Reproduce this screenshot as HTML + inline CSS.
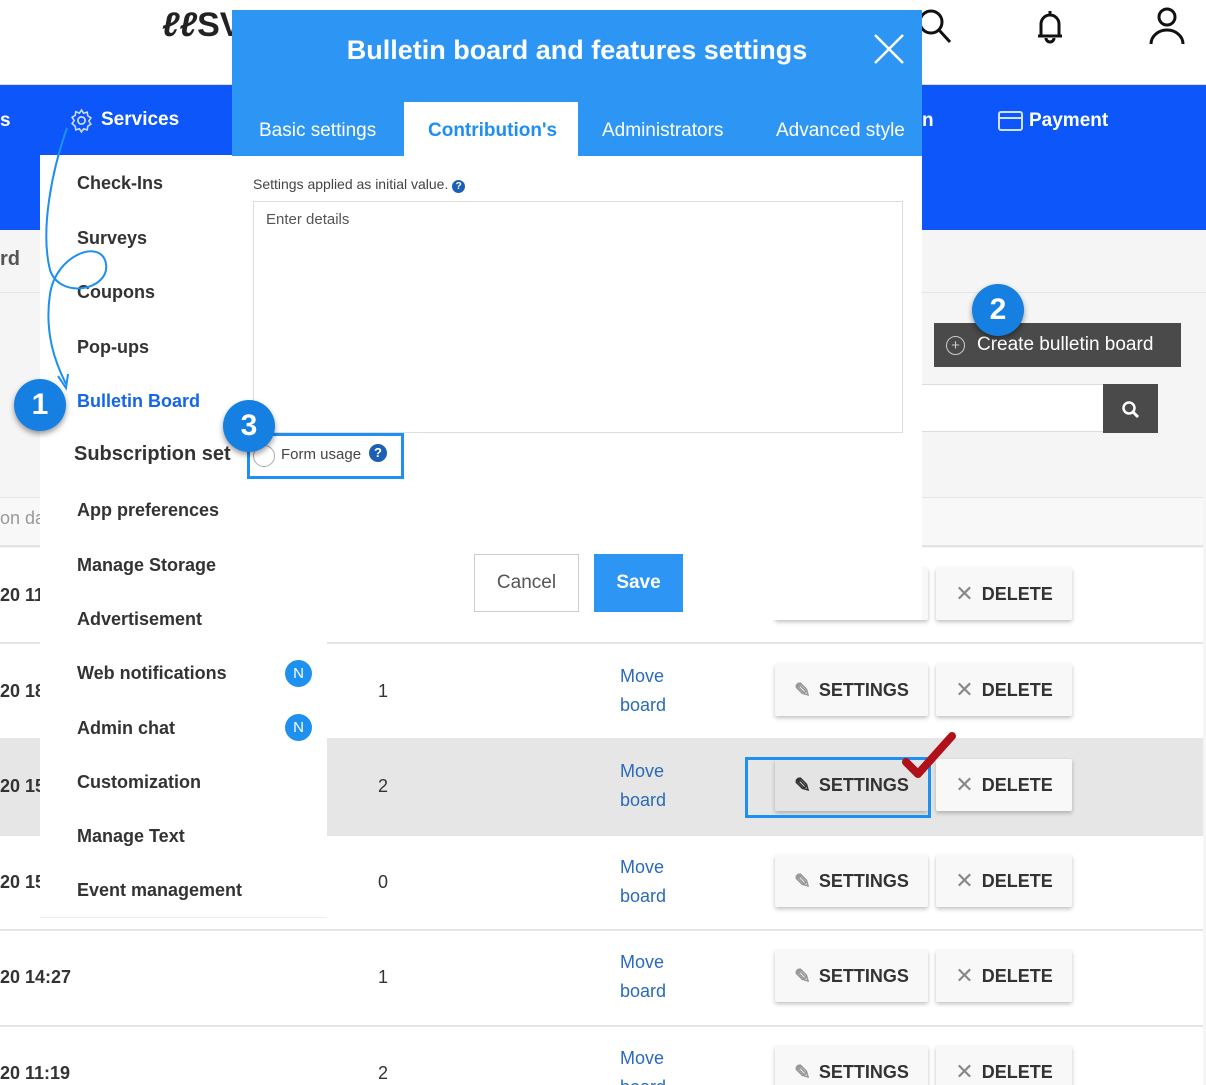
<!DOCTYPE html>
<html><head><meta charset="utf-8"><style>
*{box-sizing:border-box;margin:0;padding:0}
html,body{width:1206px;height:1085px;overflow:hidden}
body{position:relative;background:#f5f5f5;font-family:"Liberation Sans",sans-serif;color:#333}
.a{position:absolute}
.menu div{position:absolute;left:37px;font-size:18px;font-weight:bold;color:#333}
.btn{position:absolute;height:52px;background:#f8f8f8;box-shadow:0 2px 4px rgba(0,0,0,.25);border-radius:2px;font-weight:bold;font-size:18px;color:#333;display:flex;align-items:center;justify-content:center;gap:8px}
.mv{position:absolute;left:620px;color:#2a6ab8;font-size:18px;line-height:29px}
.num{position:absolute;left:378px;font-size:18px}
.dt{position:absolute;left:0;font-size:18px;font-weight:bold;color:#333}
.badge{position:absolute;width:52px;height:52px;border-radius:50%;background:#1580e2;color:#fff;font-weight:bold;font-size:30px;display:flex;align-items:center;justify-content:center;box-shadow:0 3px 6px rgba(0,0,0,.4)}
.nb{position:absolute;left:285px;width:27px;height:27px;border-radius:50%;background:#1e90f0;color:#fff;font-size:15px;display:flex;align-items:center;justify-content:center}
</style></head><body>
<div class="a" style="left:0;top:0;width:1206px;height:85px;background:#fff;border-bottom:1px solid #ddd"></div>
<div class="a" style="left:162px;top:6px;font-size:34px;font-weight:bold;color:#222;font-style:italic">ℓℓ<span style="font-style:normal">SV</span></div>
<svg class="a" style="left:915px;top:6px" width="40" height="40" viewBox="0 0 40 40"><circle cx="16" cy="16" r="11" fill="none" stroke="#111" stroke-width="3"/><path d="M24 24l11 12" stroke="#111" stroke-width="3"/></svg>
<svg class="a" style="left:1030px;top:6px" width="40" height="40" viewBox="0 0 40 40"><path d="M8 30h24M11 30V18a9 9 0 0 1 18 0v12M16 32a4 4 0 0 0 8 0M20 5v4" fill="none" stroke="#111" stroke-width="3"/></svg>
<svg class="a" style="left:1146px;top:4px" width="42" height="42" viewBox="0 0 42 42"><circle cx="21" cy="13" r="8" fill="none" stroke="#111" stroke-width="3"/><path d="M5 40a16 14 0 0 1 32 0" fill="none" stroke="#111" stroke-width="3"/></svg>
<div class="a" style="left:0;top:85px;width:1206px;height:145px;background:#0d57fa"></div>
<div class="a" style="left:0;top:110px;color:#fff;font-weight:bold;font-size:19px">s</div>
<svg class="a" style="left:69px;top:108px" width="25" height="25" viewBox="0 0 24 24"><circle cx="12" cy="12" r="3.5" fill="none" stroke="#cfe0ff" stroke-width="1.6"/><path d="M12 2l2 3 3.5-1 .5 3.5 3 2-2 3 2 3-3 2-.5 3.5L14 20l-2 3-2-3-3.5 1L6 17.5 3 15l2-3-2-3 3-2 .5-3.5L10 5z" fill="none" stroke="#cfe0ff" stroke-width="1.5"/></svg>
<div class="a" style="left:101px;top:109px;color:#fff;font-weight:bold;font-size:19px">Services</div>
<div class="a" style="left:922px;top:110px;color:#fff;font-weight:bold;font-size:19px">n</div>
<svg class="a" style="left:998px;top:111px" width="25" height="20" viewBox="0 0 25 20"><rect x="1" y="1" width="23" height="18" rx="2" fill="none" stroke="#cfe0ff" stroke-width="2"/><path d="M1 7h23" stroke="#cfe0ff" stroke-width="2"/></svg>
<div class="a" style="left:1029px;top:110px;color:#fff;font-weight:bold;font-size:19px">Payment</div>
<div class="a" style="left:0;top:248px;font-size:20px;font-weight:bold;color:#555">rd</div>
<div class="a" style="left:0;top:292px;width:1206px;height:1px;background:#e5e5e5"></div>
<div class="a" style="left:934px;top:323px;width:247px;height:44px;background:#4a4a4a;color:#fff;font-size:19px;display:flex;align-items:center;padding-left:12px;gap:12px"><span style="width:19px;height:19px;border:1.5px solid #ccc;border-radius:50%;display:inline-flex;align-items:center;justify-content:center;font-size:15px;color:#ccc">+</span>Create bulletin board</div>
<div class="a" style="left:922px;top:384px;width:181px;height:48px;background:#fff;border-top:1px solid #ddd;border-bottom:1px solid #ddd"></div>
<div class="a" style="left:1103px;top:384px;width:55px;height:49px;background:#4a4a4a"></div>
<svg class="a" style="left:1121px;top:400px" width="20" height="20" viewBox="0 0 20 20"><circle cx="8" cy="8" r="5.5" fill="none" stroke="#fff" stroke-width="2.5"/><path d="M12 12l5 5" stroke="#fff" stroke-width="3"/></svg>
<div class="a" style="left:0;top:497px;width:1203px;height:50px;background:#f8f8f8;border-top:1px solid #e5e5e5;border-bottom:2px solid #e3e3e3"></div>
<div class="a" style="left:0;top:508px;font-size:18px;color:#999">on da</div>
<div class="a" style="left:0;top:548px;width:1203px;height:537px;background:#fff"></div>
<div class="a" style="left:0;top:738px;width:1203px;height:96px;background:#e6e6e6"></div>
<div class="a" style="left:0;top:642px;width:1203px;height:2px;background:#e5e5e5"></div>
<div class="a" style="left:0;top:834px;width:1203px;height:2px;background:#e5e5e5"></div>
<div class="a" style="left:0;top:929px;width:1203px;height:2px;background:#e5e5e5"></div>
<div class="a" style="left:0;top:1025px;width:1203px;height:2px;background:#e5e5e5"></div>
<div class="dt" style="top:585px">20 11</div>
<div class="dt" style="top:681px">20 18</div>
<div class="dt" style="top:776px">20 15</div>
<div class="dt" style="top:872px">20 15</div>
<div class="dt" style="top:967px">20 14:27</div>
<div class="dt" style="top:1063px">20 11:19</div>
<div class="num" style="top:681px">1</div>
<div class="num" style="top:776px">2</div>
<div class="num" style="top:872px">0</div>
<div class="num" style="top:967px">1</div>
<div class="num" style="top:1063px">2</div>
<div class="mv" style="top:662px">Move<br>board</div>
<div class="mv" style="top:757px">Move<br>board</div>
<div class="mv" style="top:853px">Move<br>board</div>
<div class="mv" style="top:948px">Move<br>board</div>
<div class="mv" style="top:1044px">Move<br>board</div>
<div class="btn" style="left:775px;top:568px;width:153px"></div>
<div class="btn" style="left:936px;top:568px;width:136px"><span style="color:#888;font-weight:normal;font-size:22px">✕</span>DELETE</div>
<div class="btn" style="left:775px;top:664px;width:153px"><span style="color:#999;font-size:20px">✎</span>SETTINGS</div>
<div class="btn" style="left:936px;top:664px;width:136px"><span style="color:#888;font-weight:normal;font-size:22px">✕</span>DELETE</div>
<div class="btn" style="left:775px;top:759px;width:153px;background:#e4e4e4"><span style="color:#333;font-size:20px">✎</span>SETTINGS</div>
<div class="btn" style="left:936px;top:759px;width:136px"><span style="color:#888;font-weight:normal;font-size:22px">✕</span>DELETE</div>
<div class="btn" style="left:775px;top:855px;width:153px"><span style="color:#999;font-size:20px">✎</span>SETTINGS</div>
<div class="btn" style="left:936px;top:855px;width:136px"><span style="color:#888;font-weight:normal;font-size:22px">✕</span>DELETE</div>
<div class="btn" style="left:775px;top:950px;width:153px"><span style="color:#999;font-size:20px">✎</span>SETTINGS</div>
<div class="btn" style="left:936px;top:950px;width:136px"><span style="color:#888;font-weight:normal;font-size:22px">✕</span>DELETE</div>
<div class="btn" style="left:775px;top:1046px;width:153px"><span style="color:#999;font-size:20px">✎</span>SETTINGS</div>
<div class="btn" style="left:936px;top:1046px;width:136px"><span style="color:#888;font-weight:normal;font-size:22px">✕</span>DELETE</div>
<div class="a" style="left:745px;top:757px;width:186px;height:61px;border:3px solid #1e90f0"></div>
<svg class="a" style="left:900px;top:728px" width="60" height="52" viewBox="0 0 60 52"><path d="M6 34l12 12L52 8" fill="none" stroke="#b0101a" stroke-width="8" stroke-linecap="round" stroke-linejoin="round"/></svg>
<div class="a menu" style="left:40px;top:155px;width:287px;height:763px;background:#fff;border-bottom:1px solid #eee">
<div style="top:18px">Check-Ins</div>
<div style="top:73px">Surveys</div>
<div style="top:127px">Coupons</div>
<div style="top:182px">Pop-ups</div>
<div style="top:236px;color:#1565e8">Bulletin Board</div>
<div style="top:288px;left:34px;font-size:20px">Subscription set</div>
<div style="top:345px">App preferences</div>
<div style="top:400px">Manage Storage</div>
<div style="top:454px">Advertisement</div>
<div style="top:508px">Web notifications</div>
<div style="top:563px">Admin chat</div>
<div style="top:617px">Customization</div>
<div style="top:671px">Manage Text</div>
<div style="top:725px">Event management</div>
</div>
<div class="nb" style="top:660px">N</div>
<div class="nb" style="top:714px">N</div>
<div class="a" style="left:232px;top:10px;width:690px;height:610px;background:#fff"></div>
<div class="a" style="left:232px;top:10px;width:690px;height:146px;background:#2d96f5"></div>
<div class="a" style="left:232px;top:35px;width:690px;text-align:center;color:#fff;font-weight:bold;font-size:27px">Bulletin board and features settings</div>
<svg class="a" style="left:873px;top:33px" width="32" height="32" viewBox="0 0 32 32"><path d="M2 2l28 28M30 2L2 30" stroke="#fff" stroke-width="2.5"/></svg>
<div class="a" style="left:404px;top:102px;width:174px;height:54px;background:#fff"></div>
<div class="a" style="left:259px;top:120px;color:#fff;font-size:19px">Basic settings</div>
<div class="a" style="left:428px;top:120px;color:#1e8ff0;font-size:19px;font-weight:bold">Contribution's</div>
<div class="a" style="left:602px;top:120px;color:#fff;font-size:19px">Administrators</div>
<div class="a" style="left:776px;top:120px;color:#fff;font-size:19px">Advanced style</div>
<div class="a" style="left:253px;top:176px;font-size:14px;color:#444">Settings applied as initial value. <span style="display:inline-block;width:13px;height:13px;border-radius:50%;background:#1d5fb5;color:#fff;font-size:10px;text-align:center;line-height:13px;font-weight:bold">?</span></div>
<div class="a" style="left:253px;top:201px;width:650px;height:232px;border:1px solid #ddd"></div>
<div class="a" style="left:266px;top:211px;font-size:15px;color:#555">Enter details</div>
<div class="a" style="left:247px;top:433px;width:157px;height:46px;border:3px solid #1e90f0"></div>
<div class="a" style="left:253px;top:445px;width:22px;height:22px;border:1.5px solid #aaa;border-radius:50%;background:#fff"></div>
<div class="a" style="left:281px;top:446px;font-size:15px;color:#444">Form usage</div>
<div class="a" style="left:369px;top:444px;width:18px;height:18px;border-radius:50%;background:#1d5fb5;color:#fff;font-size:13px;font-weight:bold;text-align:center;line-height:18px">?</div>
<div class="a" style="left:474px;top:554px;width:105px;height:58px;border:1px solid #ccc;display:flex;align-items:center;justify-content:center;font-size:19px;color:#555">Cancel</div>
<div class="a" style="left:594px;top:554px;width:89px;height:58px;background:#2d96f5;display:flex;align-items:center;justify-content:center;font-size:19px;color:#fff;font-weight:bold">Save</div>
<svg class="a" style="left:0;top:0" width="200" height="420" viewBox="0 0 200 420"><path d="M67 128C52 170 40 230 50 270c10 30 60 20 56-6-4-26-50-10-56 30-6 40 6 70 16 90" fill="none" stroke="#1e8ff0" stroke-width="2"/><path d="M58 376l8 12 2-14" fill="none" stroke="#1e8ff0" stroke-width="2"/></svg>
<div class="badge" style="left:14px;top:379px">1</div>
<div class="badge" style="left:972px;top:284px">2</div>
<div class="badge" style="left:223px;top:400px">3</div>
</body></html>
